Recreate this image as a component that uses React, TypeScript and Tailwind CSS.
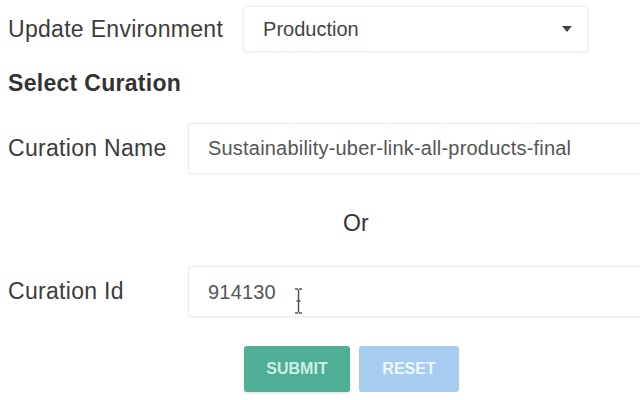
import React from "react";

const font = { fontFamily: '"Liberation Sans", Arial, sans-serif' };

function Field({ label, value, cursor }: { label: string; value: string; cursor?: boolean }) {
	return (
		<div className="flex items-center">
			<div className="w-[180px] shrink-0 text-[23px] tracking-[0.3px] text-[#3c3c3c]">{label}</div>
			<div className="flex h-[51px] w-[480px] shrink-0 items-center rounded-l-[3px] border border-[#ececec] bg-white pl-[19px] text-[20px] tracking-[0.2px] text-[#555] shadow-[0_1px_3px_rgba(0,0,0,0.05)]">
				<span>{value}</span>
				{cursor && (
					<svg className="ml-[18px] mt-[18px]" width="9" height="26" viewBox="0 0 9 26">
						<path d="M1 1h3M5 1h3M4.5 1.5v23M1 25h3M5 25h3M2.5 13h4" stroke="#555" strokeWidth="1.5" fill="none" />
					</svg>
				)}
			</div>
		</div>
	);
}

export default function App() {
	return (
		<div className="h-[400px] w-[640px] overflow-hidden bg-white pl-[8px]" style={font}>
			{/* Environment */}
			<div className="flex items-center pt-[6px]">
				<div className="text-[23px] tracking-[0.3px] text-[#3c3c3c]">Update Environment</div>
				<div className="ml-[20px] flex h-[46px] w-[345px] items-center justify-between rounded-[3px] border border-[#eeeeee] bg-white pl-[19px] pr-[15px] text-[20px] text-[#444] shadow-[0_1px_4px_rgba(0,0,0,0.06)]">
					<span>Production</span>
					<svg width="10" height="6" viewBox="0 0 10 6">
						<path d="M0 0h10L5 6z" fill="#444" />
					</svg>
				</div>
			</div>

			<div className="mt-[14px] text-[23px] font-bold tracking-[0.3px] text-[#333]">Select Curation</div>

			<div className="mt-[22px]">
				<Field label="Curation Name" value="Sustainability-uber-link-all-products-final" />
			</div>

			<div className="mt-[32px] pl-[335px] text-[23px] text-[#333]">Or</div>

			<div className="mt-[26px]">
				<Field label="Curation Id" value="914130" cursor />
			</div>

			{/* Actions */}
			<div className="mt-[29px] flex gap-[9px] pl-[236px]">
				<button className="h-[46px] w-[106px] rounded-[3px] bg-[#4fae95] text-[16px] font-bold text-[#cdeee6] shadow-[0_1px_3px_rgba(0,0,0,0.15)]">
					SUBMIT
				</button>
				<button className="h-[46px] w-[100px] rounded-[3px] bg-[#a6cdf0] text-[16px] font-bold text-[#eef6fd]">
					RESET
				</button>
			</div>
		</div>
	);
}
